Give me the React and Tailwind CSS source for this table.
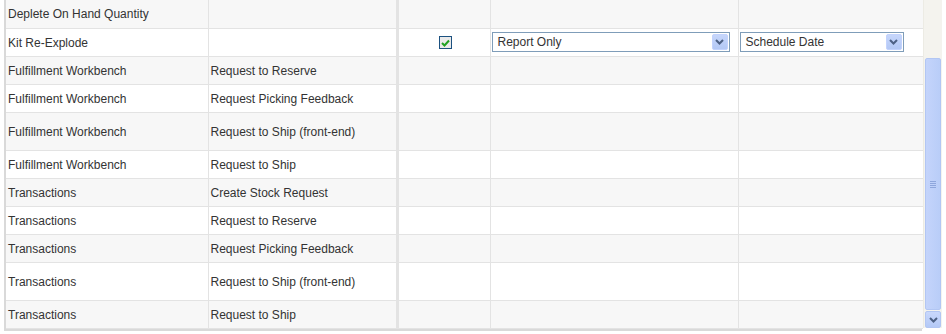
const rows = [
  { a: "Deplete On Hand Quantity", b: "" },
  { a: "Kit Re-Explode", b: "", controls: true },
  { a: "Fulfillment Workbench", b: "Request to Reserve" },
  { a: "Fulfillment Workbench", b: "Request Picking Feedback" },
  { a: "Fulfillment Workbench", b: "Request to Ship (front-end)", tall: true },
  { a: "Fulfillment Workbench", b: "Request to Ship" },
  { a: "Transactions", b: "Create Stock Request" },
  { a: "Transactions", b: "Request to Reserve" },
  { a: "Transactions", b: "Request Picking Feedback" },
  { a: "Transactions", b: "Request to Ship (front-end)", tall: true },
  { a: "Transactions", b: "Request to Ship" },
];

function Chevron({ className = "" }) {
  return (
    <svg width="9" height="6" viewBox="0 0 9 6" className={className}>
      <path d="M1 1 L4.5 4.5 L8 1" fill="none" stroke="#4d6185" strokeWidth="2" />
    </svg>
  );
}

function Select({ value, width }) {
  return (
    <div
      className="flex items-center h-[20px] border border-[#7f9db9] bg-white"
      style={{ width }}
    >
      <span className="flex-1 pl-[5px] text-[12px] text-[#333] leading-none">{value}</span>
      <span className="flex items-center justify-center w-[16px] h-[16px] mr-[1px] rounded-[2px] bg-gradient-to-b from-[#c6d6fb] to-[#b3c8f5] border border-[#c3d3fd]">
        <Chevron />
      </span>
    </div>
  );
}

function Checkbox() {
  return (
    <span className="inline-flex items-center justify-center w-[13px] h-[13px] border border-[#1c5180] bg-[#eaeaea]">
      <svg width="9" height="8" viewBox="0 0 9 8">
        <path d="M1 4 L3.5 6.5 L8 1.5" fill="none" stroke="#21a121" strokeWidth="2" />
      </svg>
    </span>
  );
}

export default function App() {
  return (
    <div className="w-[946px] h-[334px] bg-white flex font-['Liberation_Sans',Arial,sans-serif] text-[12px] text-[#333]">
      <div className="w-[4px]" />
      <div className="flex flex-col">
        <table className="border-collapse table-fixed w-[918px] border-l-2 border-[#d9d9d9]">
          <colgroup>
            <col className="w-[203px]" />
            <col className="w-[189px]" />
            <col className="w-[93px]" />
            <col className="w-[248px]" />
            <col className="w-[185px]" />
          </colgroup>
          <tbody>
            {rows.map((r, i) => (
              <tr
                key={i}
                className={`${i % 2 === 0 ? "bg-[#f7f7f7]" : "bg-white"} ${r.tall ? "h-[38px]" : "h-[28px]"} border-b border-[#e3e3e3]`}
              >
                <td className="pl-[2px] pt-[1px] align-middle border-r border-[#e3e3e3] whitespace-nowrap">{r.a}</td>
                <td className="pl-[2px] pt-[1px] align-middle border-r-[3px] border-[#e3e3e3] whitespace-nowrap">{r.b}</td>
                <td className="align-middle text-center border-r border-[#e3e3e3]">
                  {r.controls && (
                    <div className="flex justify-center pl-[2px] pt-[1px]">
                      <Checkbox />
                    </div>
                  )}
                </td>
                <td className="align-middle pl-[1px] border-r border-[#e3e3e3]">
                  {r.controls && <Select value="Report Only" width={238} />}
                </td>
                <td className="align-middle pl-[1px]">
                  {r.controls && <Select value="Schedule Date" width={164} />}
                </td>
              </tr>
            ))}
          </tbody>
        </table>
        <div className="h-[2px] bg-[#d9d9d9] w-[918px]" />
      </div>
      <div className="w-[19px] h-[328px] flex flex-col bg-[#f4f3ee] border-l border-[#ecebe4]">
        <div className="h-[58px]" />
        <div className="flex-1 mx-[1px] rounded-[2px] bg-gradient-to-r from-[#c4d4fb] to-[#b9cdf8] border border-[#b2c6f3] flex items-center justify-center">
          <div className="flex flex-col gap-[1px]">
            <div className="w-[6px] h-[1px] bg-[#8ea6dc]" />
            <div className="w-[6px] h-[1px] bg-[#8ea6dc]" />
            <div className="w-[6px] h-[1px] bg-[#8ea6dc]" />
            <div className="w-[6px] h-[1px] bg-[#8ea6dc]" />
          </div>
        </div>
        <div className="h-[17px] mx-[1px] mt-[1px] rounded-[2px] bg-gradient-to-b from-[#c9d8fc] to-[#b4c9f6] border border-[#b2c6f3] flex items-center justify-center">
          <Chevron />
        </div>
      </div>
    </div>
  );
}
